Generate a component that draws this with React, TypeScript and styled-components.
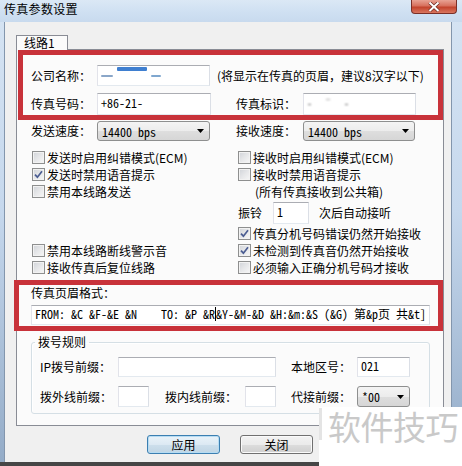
import React from 'react'
import styled, { createGlobalStyle } from 'styled-components'

const UI_FONT = `"Noto Sans CJK SC", "Liberation Sans", sans-serif`
const MONO_FONT = `"Noto Sans Mono CJK SC", "Liberation Mono", "Noto Sans CJK SC", monospace`

const GlobalStyle = createGlobalStyle`
  html, body {
    margin: 0;
    padding: 0;
    background: #fff;
  }
  body {
    font-family: ${UI_FONT};
    font-size: 12px;
    color: #000;
  }
`

const Window = styled.div`
  position: relative;
  width: 462px;
  height: 466px;
  display: flex;
  flex-direction: column;
  overflow: hidden;
  background: linear-gradient(180deg, #d6e4f3 0%, #c6d8ed 45%, #93abc7 100%);
`
const TitleBar = styled.div`
  height: 22px;
  flex: none;
  display: flex;
  justify-content: space-between;
  align-items: flex-start;
  padding-left: 4px;
  background: linear-gradient(180deg, #dbe8f5 0%, #cfe0f2 55%, #c8daee 100%);
`
const Title = styled.div`
  font-size: 12px;
  line-height: 17px;
  letter-spacing: 0.3px;
`
const CloseButton = styled.div`
  width: 46px;
  height: 14px;
  margin-right: 5px;
  box-sizing: border-box;
  border: 1px solid #7a2f27;
  border-top: none;
  border-radius: 0 0 4px 4px;
  background: linear-gradient(180deg, #e8a293 0%, #d7705d 45%, #c3432c 55%, #d9765f 100%);
  display: flex;
  align-items: center;
  justify-content: center;
`
const FrameRow = styled.div`
  flex: 1;
  display: flex;
  padding: 0 10px 0 4px;
`
const Client = styled.div`
  flex: 1;
  display: flex;
  flex-direction: column;
  padding: 13px 7px 0 11px;
  border-left: 1px solid #8396ad;
  border-right: 1px solid #8396ad;
  background: #f0f0f0;
`
const BottomEdge = styled.div`
  height: 4px;
  flex: none;
  background: #464646;
`

const TabStrip = styled.div`
  height: 14px;
  display: flex;
`
const Tab = styled.div`
  position: relative;
  z-index: 1;
  width: 52px;
  height: 15px;
  box-sizing: border-box;
  border: 1px solid #898c95;
  border-bottom: none;
  background: #fbfbfb;
  padding-left: 7px;
  line-height: 14px;
`
const Panel = styled.div`
  width: 428px;
  height: 377px;
  box-sizing: border-box;
  border: 1px solid #898c95;
  background: #fbfbfb;
  display: flex;
  flex-direction: column;
`

const RedBox = styled.div<{ $ml: number; $mt: number; $pad: string }>`
  margin: ${p => p.$mt}px 0 0 ${p => p.$ml}px;
  padding: ${p => p.$pad};
  border: 5px solid #c8323a;
  display: flex;
  flex-direction: column;
`
const Row = styled.div<{ $h: number; $mt?: number; $pl?: number }>`
  height: ${p => p.$h}px;
  margin-top: ${p => p.$mt || 0}px;
  padding-left: ${p => p.$pl || 0}px;
  display: flex;
  align-items: center;
  white-space: nowrap;
`
const Label = styled.span<{ $w?: number }>`
  width: ${p => (p.$w ? `${p.$w}px` : 'auto')};
  flex: none;
  line-height: 14px;
  white-space: nowrap;
`
const Gap = styled.span<{ $w: number }>`
  width: ${p => p.$w}px;
  flex: none;
`
const Field = styled.div<{ $w: number; $h: number }>`
  width: ${p => p.$w}px;
  height: ${p => p.$h}px;
  flex: none;
  box-sizing: border-box;
  border: 1px solid;
  border-color: #abadb3 #dbdfe6 #e3e9ef #e2e3ea;
  background: #fff;
  padding: 0 3px;
  font-family: ${MONO_FONT};
  font-size: 12px;
  line-height: ${p => p.$h - 4}px;
  white-space: pre;
  overflow: hidden;
  display: flex;
  align-items: flex-start;
`
const Note = styled.span`
  margin-left: 7px;
  line-height: 14px;
`
const Blurred = styled.span<{ $c: string }>`
  color: ${p => p.$c};
  filter: blur(0.8px);
  font-size: 10px;
  letter-spacing: 1px;
`
/* redacted company name: a smudged blue bar with a few marks around it */
const Smudge = styled.span`
  display: flex;
  align-items: flex-end;
  gap: 4px;
  height: 14px;
  filter: blur(0.7px);
`
const SmudgeMark = styled.span<{ $w: number; $h: number; $up?: number; $c: string }>`
  width: ${p => p.$w}px;
  height: ${p => p.$h}px;
  margin-bottom: ${p => p.$up || 0}px;
  background: ${p => p.$c};
  border-radius: 1px;
`
const Combo = styled.div<{ $w: number; $h: number }>`
  width: ${p => p.$w}px;
  height: ${p => p.$h}px;
  flex: none;
  box-sizing: border-box;
  border: 1px solid #8e8f8f;
  border-radius: 3px;
  background: linear-gradient(180deg, #f4f4f4 0%, #ececec 50%, #dedede 51%, #d6d6d6 100%);
  display: flex;
  align-items: center;
  justify-content: space-between;
  padding: 0 5px 0 4px;
  font-family: ${MONO_FONT};
  font-size: 12px;
  white-space: pre;
`

const OptionGrid = styled.div`
  margin: 8px 0 0 15px;
  display: grid;
  grid-template-columns: 206px 1fr;
  grid-template-rows: 17px 17px 17px 25px 17px 17px 17px;
  align-items: center;
`
const CheckItem = styled.label<{ $indent?: number }>`
  display: flex;
  align-items: center;
  gap: 2px;
  padding-left: ${p => p.$indent || 0}px;
  line-height: 14px;
  white-space: nowrap;
`
const Box = styled.span`
  width: 13px;
  height: 13px;
  flex: none;
  box-sizing: border-box;
  border: 1px solid #8e8f8f;
  background: linear-gradient(135deg, #d0d3d8 0%, #e6e7e9 50%, #f7f7f7 100%);
  box-shadow: inset 0 0 0 1px #f2f2f2;
  display: flex;
  align-items: center;
  justify-content: center;
`
const RingRow = styled.div`
  display: flex;
  align-items: center;
  white-space: nowrap;
  line-height: 14px;
`

const Caret = styled.span`
  display: inline-block;
  width: 1px;
  height: 14px;
  margin-top: 1px;
  background: #000;
  vertical-align: top;
`

const Group = styled.fieldset`
  margin: 4px 0 0 14px;
  width: 399px;
  box-sizing: border-box;
  padding: 8px 0 6px 8px;
  border: 1px solid #d5dfe5;
  border-radius: 3px;
  box-shadow: inset 1px 1px 0 #fff;
  display: flex;
  flex-direction: column;
  gap: 9px;
`
const Legend = styled.legend`
  margin-left: -5px;
  padding: 0 3px;
  font-size: 12px;
  line-height: 14px;
`

const ButtonRow = styled.div`
  margin-top: 9px;
  display: flex;
  justify-content: center;
  gap: 20px;
`
const Button = styled.div<{ $primary?: boolean }>`
  width: 73px;
  height: 19px;
  box-sizing: border-box;
  border: 1px solid ${p => (p.$primary ? '#3c7fb1' : '#707070')};
  border-radius: 3px;
  background: ${p =>
    p.$primary
      ? 'linear-gradient(180deg, #eaf3f9 0%, #dce9f3 50%, #cddfec 51%, #c0d5e4 100%)'
      : 'linear-gradient(180deg, #f2f2f2 0%, #ebebeb 50%, #dddddd 51%, #cfcfcf 100%)'};
  box-shadow: ${p => (p.$primary ? 'inset 0 0 0 1px #b6dcf3' : 'inset 0 0 0 1px #fafafa')};
  display: flex;
  align-items: center;
  justify-content: center;
  line-height: 14px;
`

const Watermark = styled.div`
  position: absolute;
  right: 0;
  bottom: 0;
  width: 143px;
  height: 59px;
  background: #fff;
  box-sizing: border-box;
  padding: 2px 0 0 9px;
  font-size: 33px;
  line-height: 34px;
  color: #c9c9c9;
  letter-spacing: -0.5px;
  white-space: nowrap;
  &::before {
    content: '';
    position: absolute;
    left: 0;
    top: 1px;
    width: 3px;
    height: 32px;
    background: #e4e4e4;
  }
`

const Check: React.FC<{ checked?: boolean; children: React.ReactNode }> = ({ checked, children }) => (
  <CheckItem>
    <Box>
      {checked && (
        <svg width="9" height="9" viewBox="0 0 9 9">
          <path d="M1 4.6 L3.4 7.2 L8 1.2" fill="none" stroke="#4b5d92" strokeWidth="1.7" />
        </svg>
      )}
    </Box>
    {children}
  </CheckItem>
)

const Arrow = () => (
  <svg width="7" height="4" viewBox="0 0 7 4">
    <path d="M0 0 H7 L3.5 4 Z" fill="#000" />
  </svg>
)

export default function App() {
  return (
    <>
      <GlobalStyle />
      <Window>
        <TitleBar>
          <Title>传真参数设置</Title>
          <CloseButton>
            <svg width="12" height="10" viewBox="0 0 12 10">
              <path d="M1.5 0.5 L10.5 9 M10.5 0.5 L1.5 9" stroke="#6b2a22" strokeWidth="3.4" />
              <path d="M1.5 0.5 L10.5 9 M10.5 0.5 L1.5 9" stroke="#fff" strokeWidth="2" />
            </svg>
          </CloseButton>
        </TitleBar>
        <FrameRow>
          <Client>
            <TabStrip>
              <Tab>线路1</Tab>
            </TabStrip>
            <Panel>
              <RedBox $ml={1} $mt={0} $pad="10px 0 0 8px">
                <Row $h={21}>
                  <Label $w={66}>公司名称：</Label>
                  <Field $w={113} $h={21}>
                    <Smudge>
                      <SmudgeMark $w={12} $h={2} $up={3} $c="#8aa6c8" />
                      <SmudgeMark $w={30} $h={4} $up={9} $c="#3f7fd0" />
                      <SmudgeMark $w={10} $h={2} $up={3} $c="#7fa7cf" />
                    </Smudge>
                  </Field>
                  <Note>(将显示在传真的页眉，建议8汉字以下)</Note>
                </Row>
                <Row $h={22} $mt={7}>
                  <Label $w={66}>传真号码：</Label>
                  <Field $w={114} $h={22}>+86-21-</Field>
                  <Gap $w={25} />
                  <Label $w={67}>传真标识：</Label>
                  <Field $w={113} $h={22}>
                    <Blurred $c="#333">-  ¨  -</Blurred>
                  </Field>
                </Row>
              </RedBox>

              <Row $h={20} $mt={1} $pl={14}>
                <Label $w={66}>发送速度：</Label>
                <Combo $w={113} $h={20}>
                  14400 bps
                  <Arrow />
                </Combo>
                <Gap $w={26} />
                <Label $w={67}>接收速度：</Label>
                <Combo $w={112} $h={20}>
                  14400 bps
                  <Arrow />
                </Combo>
              </Row>

              <OptionGrid>
                <Check>发送时启用纠错模式(ECM)</Check>
                <Check>接收时启用纠错模式(ECM)</Check>
                <Check checked>发送时禁用语音提示</Check>
                <Check>接收时禁用语音提示</Check>
                <Check>禁用本线路发送</Check>
                <CheckItem $indent={17}>(所有传真接收到公共箱)</CheckItem>
                <span />
                <RingRow>
                  振铃
                  <Gap $w={11} />
                  <Field $w={36} $h={22}>1</Field>
                  <Gap $w={10} />
                  次后自动接听
                </RingRow>
                <span />
                <Check checked>传真分机号码错误仍然开始接收</Check>
                <Check>禁用本线路断线警示音</Check>
                <Check checked>未检测到传真音仍然开始接收</Check>
                <Check>接收传真后复位线路</Check>
                <Check>必须输入正确分机号码才接收</Check>
              </OptionGrid>

              <RedBox $ml={-3} $mt={4} $pad="1px 0 1px 12px">
                <Row $h={14}>
                  <Label>传真页眉格式：</Label>
                </Row>
                <Row $h={20} $mt={5}>
                  <Field $w={399} $h={20}>
                    FROM: &amp;C &amp;F-&amp;E &amp;N    TO: &amp;P &amp;R<Caret />&amp;Y-&amp;M-&amp;D &amp;H:&amp;m:&amp;S (&amp;G) 第&amp;p页 共&amp;t]
                  </Field>
                </Row>
              </RedBox>

              <Group>
                <Legend>拨号规则</Legend>
                <Row $h={20}>
                  <Label $w={78}>IP拨号前缀：</Label>
                  <Field $w={158} $h={20} />
                  <Gap $w={15} />
                  <Label $w={66}>本地区号：</Label>
                  <Field $w={53} $h={20}>021</Field>
                </Row>
                <Row $h={21}>
                  <Label $w={78}>拨外线前缀：</Label>
                  <Field $w={31} $h={21} />
                  <Gap $w={16} />
                  <Label $w={80}>拨内线前缀：</Label>
                  <Field $w={31} $h={21} />
                  <Gap $w={15} />
                  <Label $w={66}>代接前缀：</Label>
                  <Combo $w={53} $h={21}>
                    *00
                    <Arrow />
                  </Combo>
                </Row>
              </Group>
            </Panel>
            <ButtonRow>
              <Button $primary>应用</Button>
              <Button>关闭</Button>
            </ButtonRow>
          </Client>
        </FrameRow>
        <BottomEdge />
        <Watermark>软件技巧</Watermark>
      </Window>
    </>
  )
}
